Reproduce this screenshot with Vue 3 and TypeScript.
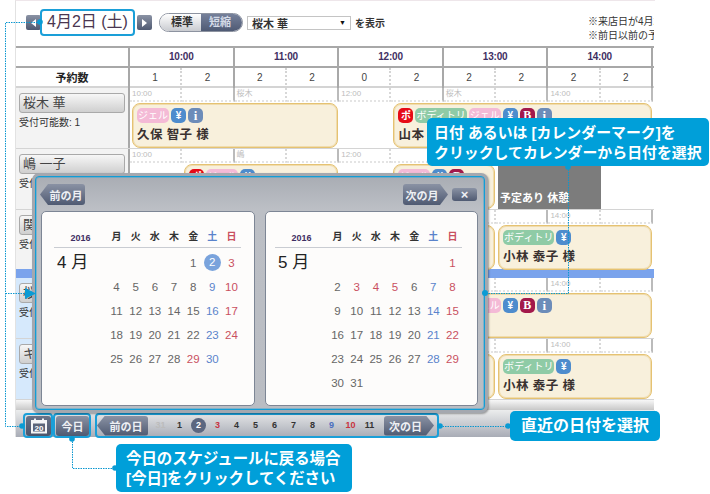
<template>
  <div class="page">
    <div class="screen">
      <div class="toolbar">
        <button class="slate step"><span class="tri tri-left"></span></button>
        <div class="date-box">4月2日 (土)</div>
        <button class="slate step next"><span class="tri tri-right"></span></button>
        <div class="toggle">
          <span class="toggle-off">標準</span>
          <span class="toggle-on">短縮</span>
        </div>
        <div class="select">
          <span>桜木 華</span>
          <span class="select-arrow">▼</span>
        </div>
        <span class="show-label">を表示</span>
        <div class="notes">
          <div>※来店日が4月2日以降の予約を表示します</div>
          <div>※前日以前の予約は変更できません</div>
        </div>
      </div>

      <div class="table">
        <div class="grid-row hour-row">
          <div class="corner"></div>
          <div v-for="h in hours" :key="h" class="hour-cell">{{ h }}</div>
        </div>
        <div class="grid-row count-row">
          <div class="count-title">予約数</div>
          <div v-for="(c, i) in counts" :key="i" class="count-cell" :class="{ 'half-end': i % 2 === 1 }">{{ c }}</div>
        </div>

        <template v-for="(row, r) in rows" :key="r">
          <div class="grid-row staff-row" :class="{ short: row.short }">
            <div class="staff-cell" :class="{ selected: row.selected }">
              <div class="staff-btn">{{ row.name }}</div>
              <div class="staff-cap">受付可能数: 1</div>
            </div>
            <div
              v-for="(label, i) in row.labels"
              :key="i"
              class="label-cell"
              :class="{ 'half-end': i % 2 === 1 }"
            >{{ label }}</div>
            <template v-for="(card, c) in row.cards" :key="c">
              <div v-if="card.busy" class="busy" :style="{ gridColumn: card.from + 1 + ' / ' + (card.to + 1) }">予定あり 休憩</div>
              <div v-else class="card" :style="{ gridColumn: card.from + 1 + ' / ' + (card.to + 1) }">
                <div class="badges">
                  <span v-for="b in card.badges" :key="b" class="badge" :class="badgeClass[b]">{{ b }}</span>
                </div>
                <div class="guest">{{ card.name }}</div>
              </div>
            </template>
          </div>
          <div v-if="row.short" class="now-bar"></div>
        </template>
      </div>

      <div class="band"></div>
      <div class="bottom-bar">
        <div class="mark cal-mark">
          <button class="slate cal-btn">
            <svg width="18" height="16" viewBox="0 0 18 16">
              <rect x="1.5" y="2.5" width="15" height="12.5" fill="#f4f5f7" stroke="#f4f5f7" />
              <rect x="3" y="5.5" width="12" height="8" fill="#5b6479" />
              <rect x="4" y="0.5" width="2" height="4" fill="#f4f5f7" />
              <rect x="12" y="0.5" width="2" height="4" fill="#f4f5f7" />
              <text x="9" y="12.8" class="cal-num">20</text>
            </svg>
          </button>
        </div>
        <div class="mark today-mark">
          <button class="slate today-btn">今日</button>
        </div>
        <div class="mark strip-mark">
          <button class="slate arrow-left day-prev">前の日</button>
          <div class="strip">
            <span v-for="d in strip" :key="d.n" class="strip-day" :class="d.cls"><i>{{ d.n }}</i></span>
          </div>
          <button class="slate arrow-right day-next">次の日</button>
        </div>
      </div>
    </div>

    <div class="modal">
      <div class="modal-inner">
        <div class="modal-head">
          <button class="slate arrow-left month-btn">前の月</button>
          <div class="head-right">
            <button class="slate arrow-right month-btn">次の月</button>
            <button class="slate close-btn">×</button>
          </div>
        </div>
        <div class="panels">
          <div v-for="m in months" :key="m.label" class="panel" :class="m.cls">
            <div class="panel-head">
              <div class="year">2016</div>
              <div class="dows">
                <span v-for="(w, i) in weekdays" :key="w" :class="{ sat: i === 5, sun: i === 6 }">{{ w }}</span>
              </div>
            </div>
            <div class="panel-body">
              <div class="month-label">{{ m.label }}</div>
              <div class="days">
                <span v-for="n in m.offset" :key="'e' + n"></span>
                <span v-for="d in m.cells" :key="d.n" :class="d.cls"><i>{{ d.n }}</i></span>
              </div>
            </div>
          </div>
        </div>
      </div>
    </div>

    <svg class="lines" width="710" height="494" viewBox="0 0 710 494">
      <g fill="none" stroke="#0a97d0" stroke-width="1" stroke-dasharray="1.5 1">
        <path d="M40 22.5H5.5V426.5H22" />
        <path d="M5.5 293.5H26" />
        <path d="M72.5 439V468.5H115" />
        <path d="M440 426.5H508" />
        <path d="M486 293.5H568.5V167" />
      </g>
      <g fill="#0a9bd4">
        <circle cx="40" cy="22" r="2.8" />
        <circle cx="22" cy="426" r="2.8" />
        <path d="M25 288V299L36 293.5Z" />
        <circle cx="72" cy="439" r="2.8" />
        <circle cx="115" cy="468" r="2.8" />
        <circle cx="440" cy="426" r="2.8" />
        <circle cx="508" cy="426" r="2.8" />
        <circle cx="485" cy="293" r="3" />
        <circle cx="568" cy="167" r="2.8" />
      </g>
    </svg>

    <div class="callout call-date">
      日付 あるいは [カレンダーマーク]を<br />クリックしてカレンダーから日付を選択
    </div>
    <div class="callout call-today">
      今日のスケジュールに戻る場合<br />[今日]をクリックしてください
    </div>
    <div class="callout call-near">直近の日付を選択</div>
  </div>
</template>

<script setup lang="ts">
interface Card {
  from: number
  to: number
  badges?: string[]
  name?: string
  busy?: boolean
}

interface Row {
  name: string
  labels: string[]
  cards: Card[]
  selected?: boolean
  short?: boolean
}

const hours = ['10:00', '11:00', '12:00', '13:00', '14:00']
const counts = [1, 2, 2, 2, 0, 2, 2, 2, 2, 2]
const weekdays = ['月', '火', '水', '木', '金', '土', '日']

const badgeClass: Record<string, string> = {
  ポ: 'b-red',
  ボディトリ: 'b-green',
  ジェル: 'b-pink',
  '¥': 'b-blue',
  B: 'b-wine',
  i: 'b-info'
}

const labelsFor = (who: string, first = '10:00', mid = '12:00') => [
  first, '', who, '', mid, '', who, '', '14:00', ''
]

const rows: Row[] = [
  {
    name: '桜木 華',
    labels: labelsFor('桜木'),
    cards: [
      { from: 1, to: 5, badges: ['ジェル', '¥', 'i'], name: '久保 智子 様' },
      { from: 6, to: 11, badges: ['ポ', 'ボディトリ', 'ジェル', '¥', 'B', 'i'], name: '山本 幸子 様' }
    ]
  },
  {
    name: '嶋 一子',
    labels: labelsFor('嶋'),
    cards: [
      { from: 2, to: 5, badges: ['ポ', 'ジェル', '¥'], name: '田中 恵 様' },
      { from: 6, to: 8, badges: ['ジェル', '¥', 'B'], name: '森 雅子 様' },
      { from: 8, to: 10, busy: true }
    ]
  },
  {
    name: '関口 恵',
    short: true,
    labels: labelsFor('関口'),
    cards: [
      { from: 6, to: 8, badges: ['ジェル', '¥'], name: '上田 恵 様' },
      { from: 8, to: 11, badges: ['ボディトリ', '¥'], name: '小林 泰子 様' }
    ]
  },
  {
    name: '桜井 恵',
    selected: true,
    labels: labelsFor('桜井'),
    cards: [{ from: 6, to: 11, badges: ['ポ', 'ボディトリ', 'ジェル', '¥', 'B', 'i'], name: '山本 幸子 様' }]
  },
  {
    name: 'キム 恵',
    selected: true,
    labels: labelsFor('キム'),
    cards: [
      { from: 6, to: 8, badges: ['ジェル', '¥'], name: '上田 恵 様' },
      { from: 8, to: 11, badges: ['ボディトリ', '¥'], name: '小林 泰子 様' }
    ]
  }
]

const buildMonth = (label: string, cls: string, offset: number, total: number, holidays: number[], picked = 0) => {
  const cells = []
  for (let n = 1; n <= total; n++) {
    const col = (offset + n - 1) % 7
    let c = ''
    if (col === 6 || holidays.includes(n)) c = 'sun'
    else if (col === 5) c = 'sat'
    if (n === picked) c = 'picked'
    cells.push({ n, cls: c })
  }
  return { label, cls, offset, cells }
}

const months = [
  buildMonth('4 月', 'panel-a', 4, 30, [29], 2),
  buildMonth('5 月', 'panel-b', 6, 31, [3, 4, 5])
]

const strip = [
  { n: 31, cls: 'past' },
  { n: 1, cls: '' },
  { n: 2, cls: 'now' },
  { n: 3, cls: 'sun' },
  { n: 4, cls: '' },
  { n: 5, cls: '' },
  { n: 6, cls: '' },
  { n: 7, cls: '' },
  { n: 8, cls: '' },
  { n: 9, cls: 'sat' },
  { n: 10, cls: 'sun' },
  { n: 11, cls: '' }
]
</script>

<style>
html,
body {
  margin: 0;
  background: #fff;
}
</style>

<style scoped>
.page {
  position: relative;
  width: 710px;
  height: 494px;
  overflow: hidden;
  background: #fff;
  font-family: "Liberation Sans", "Noto Sans CJK JP", sans-serif;
  color: #333;
}

button {
  margin: 0;
  padding: 0;
  border: 0;
  font-family: inherit;
  cursor: pointer;
}

.screen {
  box-sizing: border-box;
  width: 640px;
  height: 437px;
  margin-left: 15px;
  border-left: 1px solid #e2e2e2;
  border-top: 1px solid #eee6ea;
}

.slate {
  background: linear-gradient(#8a92a4, #4f5a72);
  color: #eef0f4;
  border-radius: 3px;
  font-weight: 700;
  font-size: 11px;
}

/* toolbar */
.toolbar {
  display: flex;
  align-items: center;
  box-sizing: border-box;
  width: 638px;
  height: 45px;
  padding: 0 0 2px 10px;
  overflow: hidden;
  white-space: nowrap;
}

.step {
  flex: none;
  display: flex;
  align-items: center;
  justify-content: center;
  width: 15px;
  height: 15px;
  border-radius: 2px;
}

.next {
  margin-left: 2px;
}

.tri {
  width: 0;
  height: 0;
  border-top: 4px solid transparent;
  border-bottom: 4px solid transparent;
}

.tri-left {
  border-right: 5px solid #fff;
}

.tri-right {
  border-left: 5px solid #fff;
}

.date-box {
  flex: none;
  box-sizing: border-box;
  width: 95px;
  height: 27px;
  margin-left: -1px;
  border: 2px solid #1a9fd8;
  border-radius: 4px;
  background: #fff;
  font-size: 16px;
  line-height: 22px;
  text-align: center;
  color: #4a3650;
}

.toggle {
  flex: none;
  display: flex;
  width: 84px;
  height: 19px;
  margin-left: 7px;
  border-radius: 10px;
  overflow: hidden;
  border: 1px solid #8d93a0;
  box-sizing: border-box;
  font-size: 11px;
  font-weight: 700;
  line-height: 17px;
  text-align: center;
}

.toggle-off {
  flex: 1;
  padding-left: 3px;
  background: linear-gradient(#fff, #c9cbd0);
  color: #333;
}

.toggle-on {
  flex: 1;
  padding-right: 3px;
  background: linear-gradient(#75809a, #4f5a74);
  color: #d5dbe8;
}

.select {
  flex: none;
  display: flex;
  align-items: center;
  justify-content: space-between;
  box-sizing: border-box;
  width: 104px;
  height: 14px;
  margin-left: 4px;
  padding: 0 4px;
  border: 1px solid #c4c4c4;
  font-size: 11px;
  font-weight: 700;
  color: #333;
}

.select-arrow {
  font-size: 7px;
  color: #111;
}

.show-label {
  flex: none;
  margin-left: 4px;
  font-size: 10px;
  font-weight: 700;
}

.notes {
  flex: none;
  margin-left: auto;
  width: 66px;
  font-size: 10px;
  line-height: 14px;
  color: #333;
  padding-top: 12px;
}

/* table */
.table {
  width: 638px;
}

.grid-row {
  display: grid;
  grid-template-columns: 114px repeat(10, 52.3px);
}

.hour-row {
  grid-template-columns: 114px repeat(5, 104.6px);
  height: 22px;
  box-sizing: border-box;
  border-top: 2px solid #a8a8a8;
  border-bottom: 2px solid #a8a8a8;
}

.corner {
  border-right: 2px solid #a8a8a8;
  box-sizing: border-box;
}

.hour-cell {
  box-sizing: border-box;
  border-right: 2px solid #a8a8a8;
  font-size: 10px;
  font-weight: 700;
  line-height: 18px;
  text-align: center;
  color: #3f2f63;
  letter-spacing: -0.2px;
}

.count-row {
  height: 20px;
  box-sizing: border-box;
  border-bottom: 2px solid #d4d4d4;
}

.count-title {
  box-sizing: border-box;
  border-right: 2px solid #a8a8a8;
  font-size: 11px;
  font-weight: 700;
  line-height: 21px;
  text-align: center;
  color: #222;
}

.count-cell {
  box-sizing: border-box;
  font-size: 10px;
  line-height: 20px;
  text-align: center;
  color: #444;
  border-right: 2px dotted #d4d4d4;
}

.count-cell.half-end {
  border-right: 2px solid #a8a8a8;
}

.staff-row {
  grid-template-rows: 14px 46px;
  height: 61px;
  box-sizing: border-box;
  border-bottom: 1px solid #d4d4d4;
}

.staff-row.short {
  grid-template-rows: 14px 45px;
  height: 59px;
  border-bottom: 0;
}

.staff-cell {
  grid-row: 1 / 3;
  grid-column: 1;
  box-sizing: border-box;
  padding: 5px 0 0 3px;
  background: #f3f3f3;
  border-right: 2px solid #a8a8a8;
}

.staff-cell.selected {
  background: #d6e9fc;
}

.staff-btn {
  box-sizing: border-box;
  width: 106px;
  height: 20px;
  padding-left: 3px;
  border: 1px solid #a9a9a9;
  border-radius: 3px;
  background: linear-gradient(#f7f7f7, #cfcfcf);
  font-size: 13px;
  line-height: 18px;
  color: #444;
}

.staff-cap {
  margin-top: 3px;
  font-size: 10px;
  line-height: 14px;
  color: #333;
  white-space: nowrap;
}

.label-cell {
  grid-row: 1;
  box-sizing: border-box;
  height: 14px;
  padding-left: 2px;
  border-right: 2px dotted #d8d8d8;
  border-bottom: 2px dotted #e4e4e4;
  font-size: 8px;
  line-height: 12px;
  color: #bdbdbd;
  white-space: nowrap;
}

.label-cell.half-end {
  border-right: 2px solid #bbb;
}

.card {
  box-sizing: border-box;
  grid-row: 2;
  min-width: 0;
  height: 45px;
  margin: 1px 1px 0 2px;
  padding: 4px 4px 0 4px;
  background: #f8f0dc;
  border: 1px solid #e5c272;
  box-shadow: inset 0 0 0 1px rgba(230, 195, 115, 0.45);
  border-radius: 8px;
  overflow: hidden;
  white-space: nowrap;
}

.busy {
  grid-row: 2;
  margin-left: 2px;
  height: 46px;
  box-sizing: border-box;
  padding: 26px 0 0 2px;
  background: #7c7c7c;
  color: #fff;
  font-size: 11px;
  font-weight: 700;
  line-height: 18px;
  white-space: nowrap;
  overflow: hidden;
}

.badges {
  display: flex;
  gap: 2px;
  height: 15px;
}

.badge {
  flex: none;
  min-width: 15px;
  height: 15px;
  padding: 0 1px;
  box-sizing: border-box;
  border-radius: 5px;
  color: #fff;
  font-size: 10px;
  line-height: 15px;
  text-align: center;
}

.b-pink {
  padding: 0 1px;
  background: #f4bad6;
}

.b-green {
  background: #8fcba6;
}

.b-red {
  background: #e60b17;
  font-weight: 700;
}

.b-blue {
  background: #4e8ccd;
  font-weight: 700;
}

.b-wine {
  background: #a3194b;
  font-family: "Liberation Serif", serif;
  font-weight: 700;
  font-size: 12px;
}

.b-info {
  background: #6c8cb9;
  font-family: "Liberation Serif", serif;
  font-weight: 700;
  font-size: 13px;
}

.guest {
  margin-top: 3px;
  font-size: 12.5px;
  font-weight: 700;
  line-height: 18px;
  letter-spacing: 0.4px;
  color: #3a3230;
}

.now-bar {
  height: 9px;
  background: #7aa3ec;
}

/* bottom */
.band {
  width: 638px;
  height: 10px;
  background: linear-gradient(#f7f7f7, #c8c8c8);
}

.bottom-bar {
  display: flex;
  box-sizing: border-box;
  width: 639px;
  height: 27px;
  padding: 3px 0 0 7px;
  background: linear-gradient(#eceded, #a8acb6);
}

.mark {
  box-sizing: border-box;
  display: flex;
  align-items: center;
  height: 25px;
  border: 2px solid #1a9fd8;
  border-radius: 4px;
}

.cal-mark {
  width: 30px;
  padding-left: 1px;
}

.cal-btn {
  width: 25px;
  height: 20px;
  display: flex;
  align-items: center;
  justify-content: center;
  background: linear-gradient(#6a7388, #4a546b);
}

.cal-num {
  font-size: 8px;
  font-weight: 700;
  text-anchor: middle;
  fill: #fff;
}

.today-mark {
  width: 38px;
  padding-left: 1px;
}

.today-btn {
  width: 33px;
  height: 20px;
  font-size: 11px;
}

.strip-mark {
  width: 344px;
  margin-left: 4px;
}

.arrow-left {
  clip-path: polygon(8px 0, 100% 0, 100% 100%, 8px 100%, 0 50%);
  padding-left: 7px;
}

.arrow-right {
  clip-path: polygon(0 0, calc(100% - 8px) 0, 100% 50%, calc(100% - 8px) 100%, 0 100%);
  padding-right: 7px;
}

.day-prev {
  width: 51px;
  height: 20px;
  flex: none;
}

.day-next {
  width: 50px;
  height: 20px;
  flex: none;
  margin-left: 5px;
}

.strip {
  display: flex;
  margin-left: 3px;
}

.strip-day {
  width: 19px;
  font-size: 9px;
  font-weight: 700;
  line-height: 15px;
  text-align: center;
  color: #333;
}

.strip-day i {
  font-style: normal;
  display: block;
}

.strip-day.past {
  color: #bcbcbc;
}

.strip-day.sun {
  color: #c8343f;
}

.strip-day.sat {
  color: #4a6fc0;
}

.strip-day.now i {
  width: 15px;
  height: 15px;
  margin: 0 auto;
  border-radius: 50%;
  background: #5b6780;
  color: #fff;
}

/* modal */
.modal {
  position: absolute;
  left: 32px;
  top: 173px;
  box-sizing: border-box;
  width: 456px;
  height: 240px;
  border: 3px solid #a4a8af;
  border-radius: 7px;
  background: #a4a8af;
  box-shadow: 1px 1px 2px rgba(0, 0, 0, 0.35);
}

.modal-inner {
  box-sizing: border-box;
  height: 100%;
  padding: 1px;
  border: 1px solid #129dd6;
  border-radius: 4px;
  box-shadow: inset 0 0 0 1px rgba(18, 157, 214, 0.35);
  background: linear-gradient(#a9adb4, #bcbfc5 14%, #babdc3);
}

.modal-head {
  display: flex;
  justify-content: space-between;
  align-items: center;
  height: 33px;
  padding: 0 6px 0 3px;
}

.head-right {
  display: flex;
  align-items: center;
  gap: 4px;
}

.month-btn {
  width: 45px;
  height: 21px;
  font-size: 11px;
}

.close-btn {
  width: 25px;
  height: 13px;
  font-size: 13px;
  line-height: 13px;
}

.panels {
  display: flex;
  gap: 10px;
  padding-left: 4px;
}

.panel {
  box-sizing: border-box;
  height: 195px;
  padding-top: 17px;
  border: 1px solid #7d8695;
  border-radius: 5px;
  background: #fdfcfb;
}

.panel-a {
  width: 214px;
  padding-left: 12px;
}

.panel-b {
  width: 213px;
  padding-left: 9px;
}

.panel-head {
  display: flex;
  width: 187px;
  height: 18px;
  border-bottom: 1px solid #c9ccd2;
}

.year {
  width: 53px;
  font-size: 9px;
  font-weight: 700;
  line-height: 19px;
  text-align: center;
  color: #3f2f63;
}

.dows {
  display: grid;
  grid-template-columns: repeat(7, 19.15px);
  font-size: 10px;
  font-weight: 700;
  line-height: 16px;
  text-align: center;
  color: #333;
}

.panel-body {
  display: flex;
  width: 187px;
  margin-top: 3px;
}

.month-label {
  width: 53px;
  padding-left: 3px;
  box-sizing: border-box;
  font-size: 17px;
  line-height: 24px;
  color: #222;
  white-space: nowrap;
}

.days {
  display: grid;
  grid-template-columns: repeat(7, 19.15px);
  grid-auto-rows: 24px;
  font-size: 11.5px;
  text-align: center;
  color: #666;
}

.days span {
  line-height: 24px;
}

.days i {
  font-style: normal;
}

.dows .sat,
.days .sat {
  color: #5a83cb;
}

.dows .sun,
.days .sun {
  color: #c9505f;
}

.days .picked i {
  display: block;
  width: 17px;
  height: 17px;
  margin: 3px auto 0;
  border-radius: 50%;
  background: #7aa3dc;
  color: #fff;
  line-height: 17px;
}

/* annotations */
.lines {
  position: absolute;
  left: 0;
  top: 0;
  pointer-events: none;
}

.callout {
  position: absolute;
  box-sizing: border-box;
  background: #009fd9;
  border-radius: 5px;
  color: #fff;
  font-weight: 700;
  white-space: nowrap;
}

.call-date {
  left: 427px;
  top: 118px;
  width: 282px;
  height: 48px;
  padding: 5px 0 0 7px;
  font-size: 14.9px;
  line-height: 20px;
}

.call-today {
  left: 116px;
  top: 444px;
  width: 236px;
  height: 48px;
  padding: 5px 0 0 10px;
  font-size: 15.4px;
  line-height: 20px;
}

.call-near {
  left: 510px;
  top: 411px;
  width: 150px;
  height: 30px;
  padding-left: 11px;
  font-size: 16px;
  line-height: 30px;
}
</style>
